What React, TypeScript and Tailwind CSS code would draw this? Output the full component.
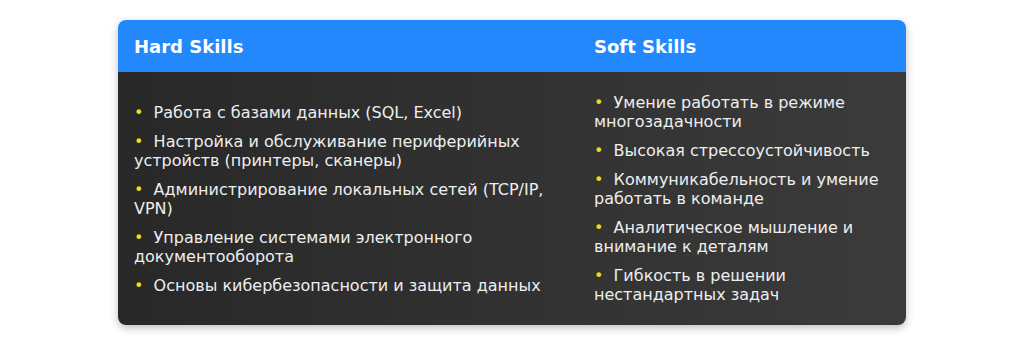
import React from 'react';

const hard = [
  'Работа с базами данных (SQL, Excel)',
  'Настройка и обслуживание периферийных устройств (принтеры, сканеры)',
  'Администрирование локальных сетей (TCP/IP, VPN)',
  'Управление системами электронного документооборота',
  'Основы кибербезопасности и защита данных',
];

const soft = [
  'Умение работать в режиме многозадачности',
  'Высокая стрессоустойчивость',
  'Коммуникабельность и умение работать в команде',
  'Аналитическое мышление и внимание к деталям',
  'Гибкость в решении нестандартных задач',
];

const SkillList: React.FC<{ items: string[] }> = ({ items }) => (
  <ul className="flex flex-col gap-[10px]">
    {items.map((t) => (
      <li key={t} className="leading-[19px]">
        <span className="text-[#eedc1c]">•</span>
        <span>{'\u00a0\u00a0'}{t}</span>
      </li>
    ))}
  </ul>
);

export default function App() {
  return (
    <div className="min-h-screen bg-white pt-5 px-[118px] [font-family:'DejaVu_Sans',sans-serif]">
      <div className="w-[788px] rounded-lg overflow-hidden shadow-[0_3px_8px_rgba(0,0,0,0.25)]">
        <div className="grid grid-cols-[460px_328px] bg-[#2388fb] text-white font-bold text-[18px] h-[52px] items-center">
          <div className="pl-4 pt-px">Hard Skills</div>
          <div className="pl-4 pt-px">Soft Skills</div>
        </div>
        <div className="grid grid-cols-[460px_328px] bg-gradient-to-r from-[#282828] to-[#3b3b3b] text-[#eeeeee] text-[16px] pt-[21px] pb-[21px] items-center">
          <div className="px-4">
            <SkillList items={hard} />
          </div>
          <div className="px-4">
            <SkillList items={soft} />
          </div>
        </div>
      </div>
    </div>
  );
}
